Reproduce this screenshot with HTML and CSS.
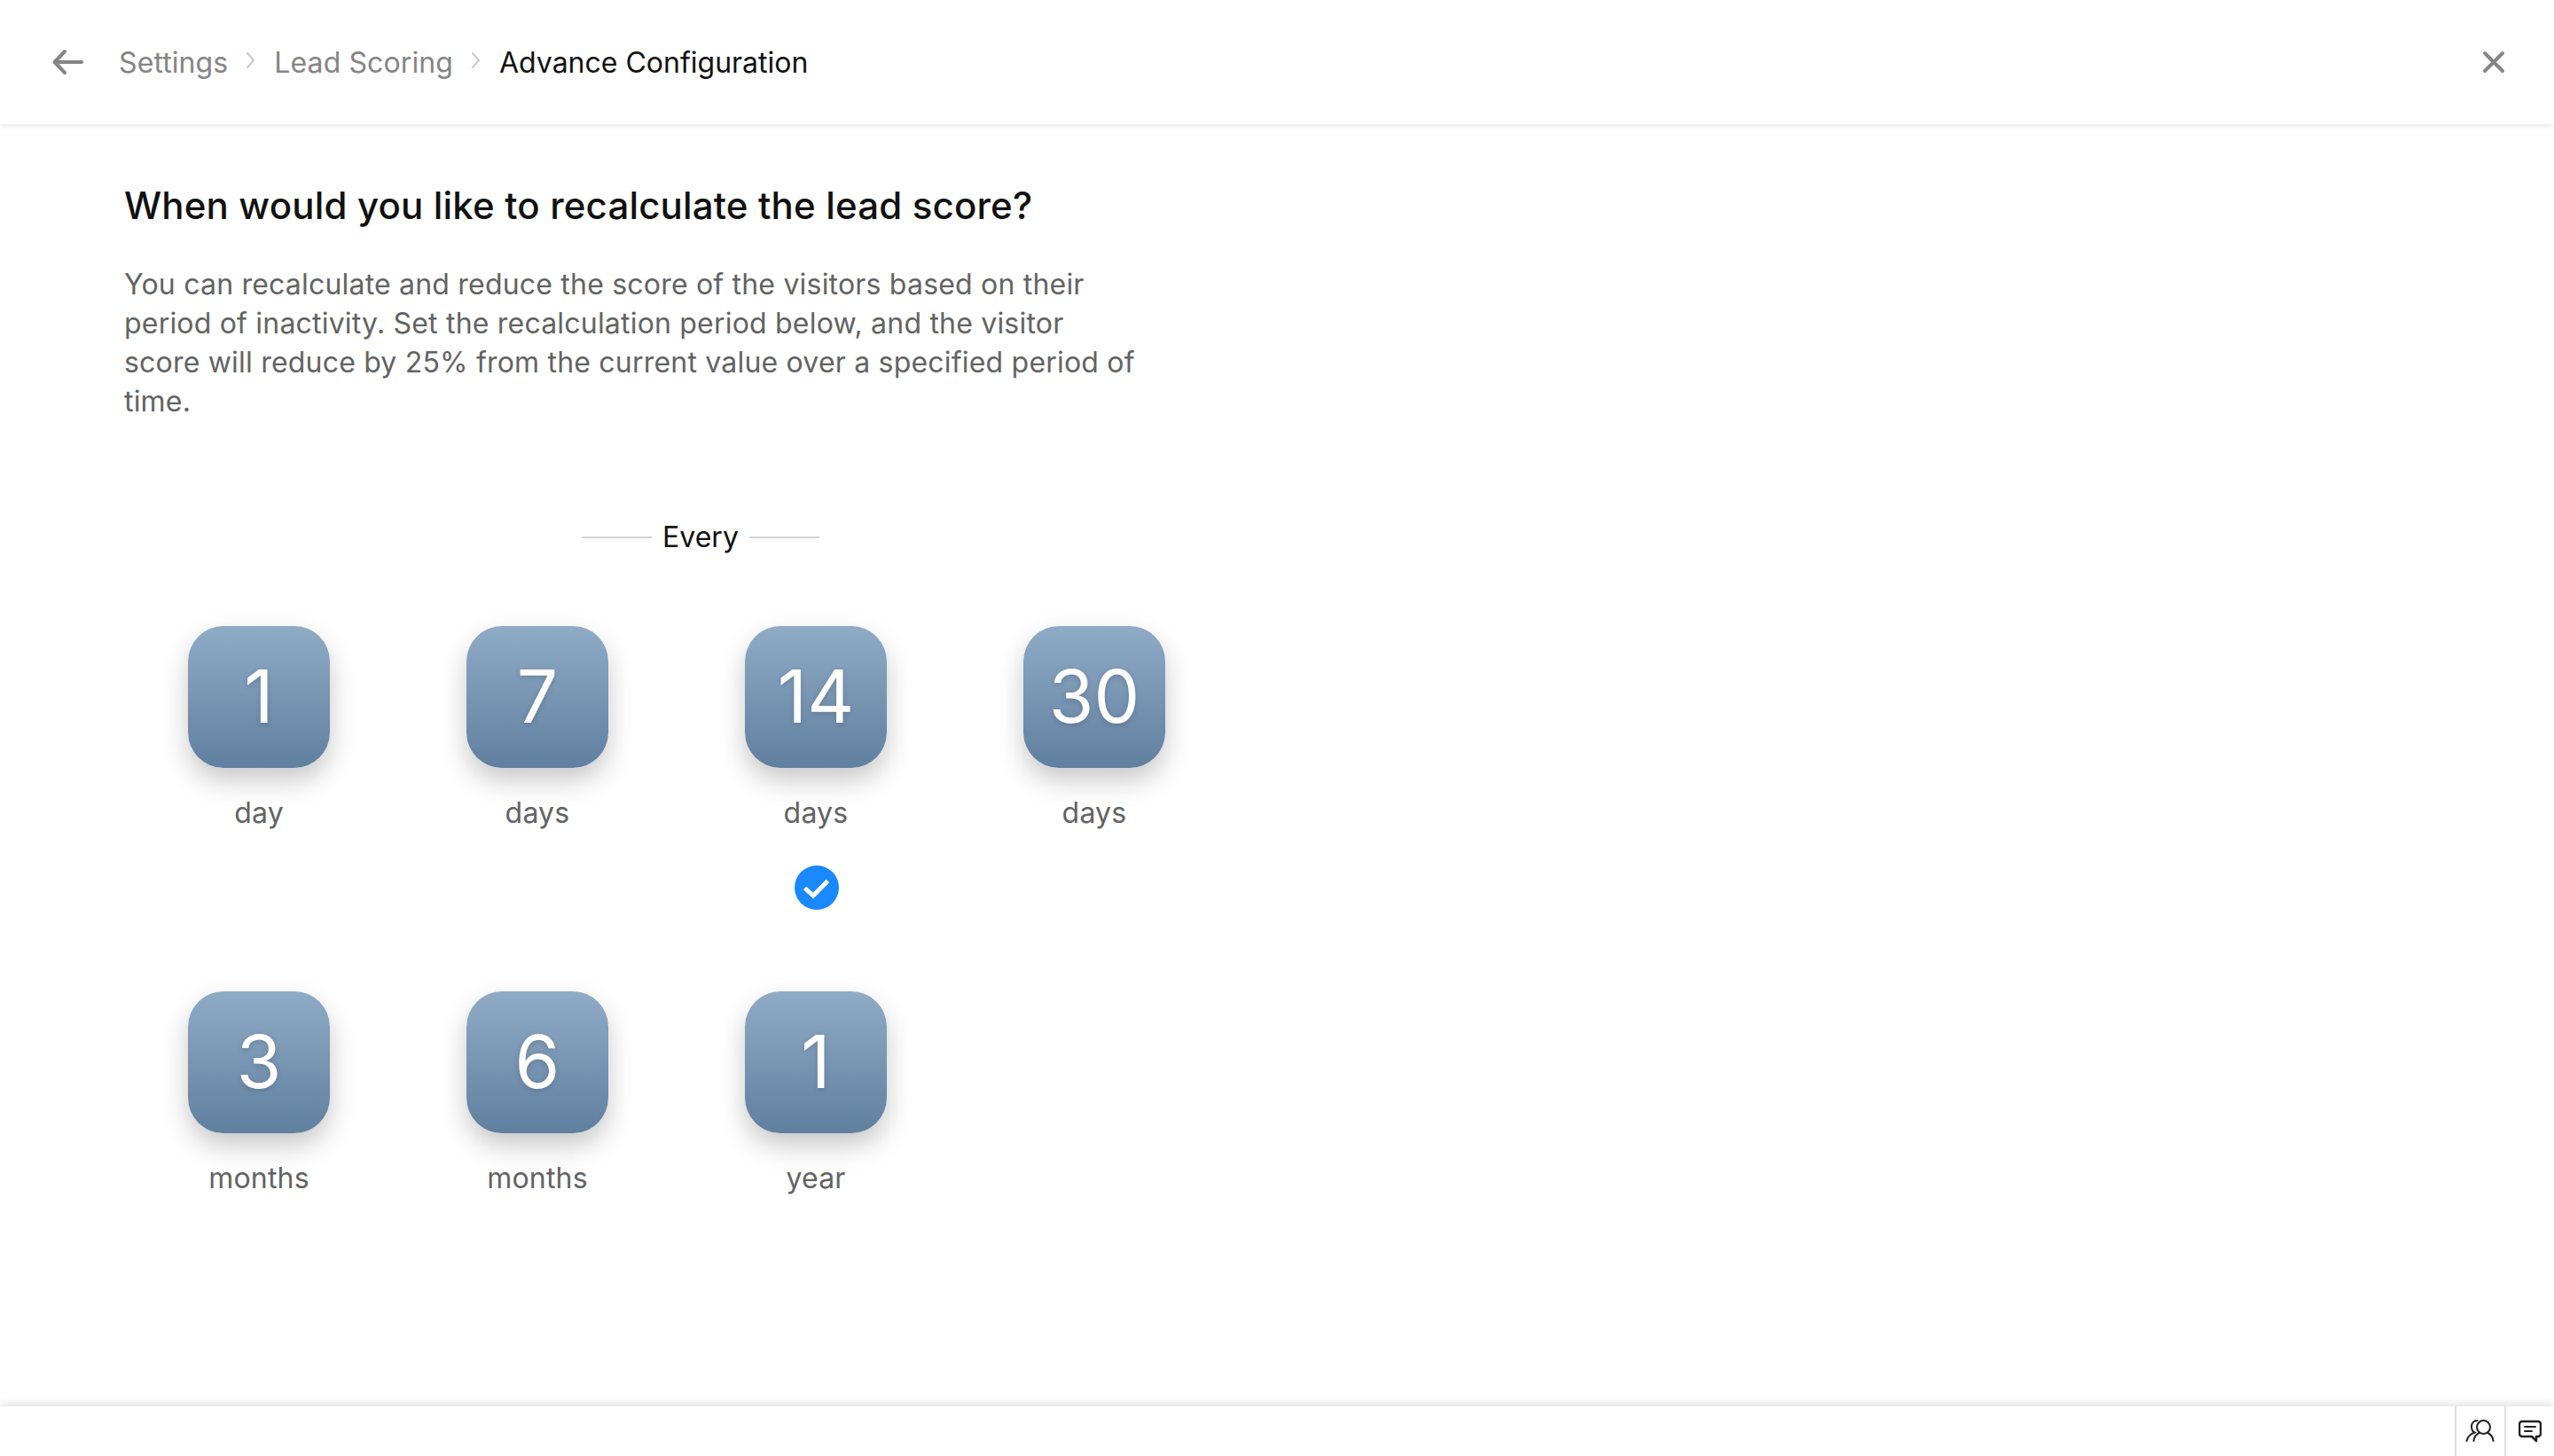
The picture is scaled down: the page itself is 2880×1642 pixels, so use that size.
FILE: index.html
```html
<!DOCTYPE html>
<html lang="en">
<head>
  <meta charset="UTF-8">
  <meta name="viewport" content="width=device-width, initial-scale=1.0">
  <title>Advance Configuration</title>
  <link rel="stylesheet" href="styles.css">
</head>
<body>
  <header class="topbar">
    <svg class="back-icon" width="36" height="32" viewBox="0 0 36 32" fill="none" stroke="#858585" stroke-width="4" stroke-linecap="round" stroke-linejoin="round">
      <path d="M4 16H34M15 4L3.500 16L15 28"/>
    </svg>
    <nav class="crumbs">
      <span class="crumb">Settings</span>
      <svg class="crumb-sep" width="12" height="20" viewBox="0 0 12 20" fill="none" stroke="#c9c9c9" stroke-width="2" stroke-linecap="round" stroke-linejoin="round"><path d="M2 2L9 10L2 18"/></svg>
      <span class="crumb">Lead Scoring</span>
      <svg class="crumb-sep" width="12" height="20" viewBox="0 0 12 20" fill="none" stroke="#c9c9c9" stroke-width="2" stroke-linecap="round" stroke-linejoin="round"><path d="M2 2L9 10L2 18"/></svg>
      <span class="crumb crumb-current">Advance Configuration</span>
    </nav>
    <svg class="close-icon" width="28" height="28" viewBox="0 0 28 28" fill="none" stroke="#858585" stroke-width="4" stroke-linecap="round"><path d="M4 4L24 24M24 4L4 24"/></svg>
  </header>

  <main class="content">
    <h1>When would you like to recalculate the lead score?</h1>
    <p class="intro">You can recalculate and reduce the score of the visitors based on their period of inactivity. Set the recalculation period below, and the visitor score will reduce by 25% from the current value over a specified period of time.</p>

    <div class="every"><span class="every-line"></span><span>Every</span><span class="every-line"></span></div>

    <div class="periods">
      <div class="period"><div class="tile">1</div><div class="unit">day</div></div>
      <div class="period"><div class="tile">7</div><div class="unit">days</div></div>
      <div class="period">
        <div class="tile">14</div><div class="unit">days</div>
        <svg class="check" width="50" height="50" viewBox="0 0 50 50"><circle cx="25" cy="25" r="25" fill="#1a88ff"/><path d="M11.500 25.500L21 34L37.500 17.500" fill="none" stroke="#fff" stroke-width="5"/></svg>
      </div>
      <div class="period"><div class="tile">30</div><div class="unit">days</div></div>
      <div class="period"><div class="tile">3</div><div class="unit">months</div></div>
      <div class="period"><div class="tile">6</div><div class="unit">months</div></div>
      <div class="period"><div class="tile">1</div><div class="unit">year</div></div>
    </div>
  </main>

  <footer class="bottombar">
    <div class="foot-btn">
      <svg width="34" height="28" viewBox="0 0 34 28" fill="none" stroke="#222" stroke-width="2" stroke-linecap="round">
        <circle cx="20.500" cy="9.500" r="7.500"/>
        <path d="M9.500 25C10 20 12.500 17.500 15.500 16M31.500 25C31 20 28.500 17.500 25.500 16"/>
        <path d="M13.500 2C9.500 2 7 5 7 9C7 12 8.500 14.500 10.500 15.500C6 17 2.500 20 1.500 25"/>
      </svg>
    </div>
    <div class="foot-btn">
      <svg width="26" height="26" viewBox="0 0 26 26" fill="none" stroke="#222" stroke-width="2.500" stroke-linejoin="round" stroke-linecap="round">
        <path d="M4 2H22C23.500 2 25 3.500 25 5V16C25 17.500 23.500 19 22 19H20V24L15 19H4C2.500 19 1 17.500 1 16V5C1 3.500 2.500 2 4 2Z"/>
        <path d="M7 8H19M7 13H15" stroke-width="2"/>
      </svg>
    </div>
  </footer>
</body>
</html>
```

FILE: styles.css
```css
* {
  box-sizing: border-box;
}
body {
  font-family: Inter, "Liberation Sans", sans-serif;
  background-color: #fff;
  margin: 0;
  height: 100vh;
  display: flex;
  flex-direction: column;
  overflow: hidden;
}
.topbar {
  height: 140px;
  flex-shrink: 0;
  display: flex;
  align-items: center;
  padding: 0 58px;
  box-shadow: 0 2px 6px rgba(0, 0, 0, 0.1);
}
.back-icon {
  margin-right: 40px;
  flex-shrink: 0;
}
.crumbs {
  display: flex;
  align-items: center;
  flex: 1;
  gap: 20px;
}
.crumb {
  font-size: 32px;
  color: #858585;
  letter-spacing: 0.1px;
}
.crumb-current {
  color: #111;
  letter-spacing: 0;
}
.crumb-sep {
  margin-top: -4px;
}
.close-icon {
  flex-shrink: 0;
  margin-right: -4px;
}
.content {
  flex: 1;
  padding: 64px 0 0 140px;
  overflow: hidden;
}
h1 {
  font-size: 42px;
  font-weight: 500;
  line-height: 56px;
  letter-spacing: 0.17px;
  color: #111;
  margin: 0 0 39px;
}
.intro {
  width: 1150px;
  font-size: 32px;
  line-height: 44px;
  letter-spacing: 0.2px;
  color: #636363;
  margin: 0 0 109px;
}
.every {
  width: 268px;
  margin-left: 516px;
  display: flex;
  align-items: center;
  gap: 12px;
  font-size: 32px;
  line-height: 44px;
  color: #111;
}
.every-line {
  flex: 1;
  height: 2px;
  background: #d4d4d4;
}
.periods {
  display: grid;
  grid-template-columns: repeat(4, 160px);
  grid-auto-rows: 412px;
  column-gap: 154px;
  margin: 78px 0 0 72px;
}
.period {
  display: flex;
  flex-direction: column;
  align-items: center;
}
.tile {
  width: 160px;
  height: 160px;
  border-radius: 40px;
  background: linear-gradient(180deg, #8fabc6 0%, #617f9f 100%);
  box-shadow: 0 14px 30px rgba(0, 0, 0, 0.22);
  color: #fff;
  font-size: 82px;
  line-height: 160px;
  text-align: center;
  text-shadow: 0 2px 6px rgba(0, 0, 0, 0.15);
}
.unit {
  font-size: 32px;
  line-height: 44px;
  letter-spacing: 0.2px;
  color: #636363;
  margin-top: 29px;
}
.check {
  margin-top: 37px;
  margin-left: 2px;
}
.bottombar {
  height: 56px;
  flex-shrink: 0;
  display: flex;
  justify-content: flex-end;
  background: #fff;
  box-shadow: 0 -2px 10px rgba(0, 0, 0, 0.14);
  position: relative;
}
.foot-btn {
  width: 56px;
  display: flex;
  align-items: center;
  justify-content: center;
  border-left: 2px solid #e0e0e0;
}
```
